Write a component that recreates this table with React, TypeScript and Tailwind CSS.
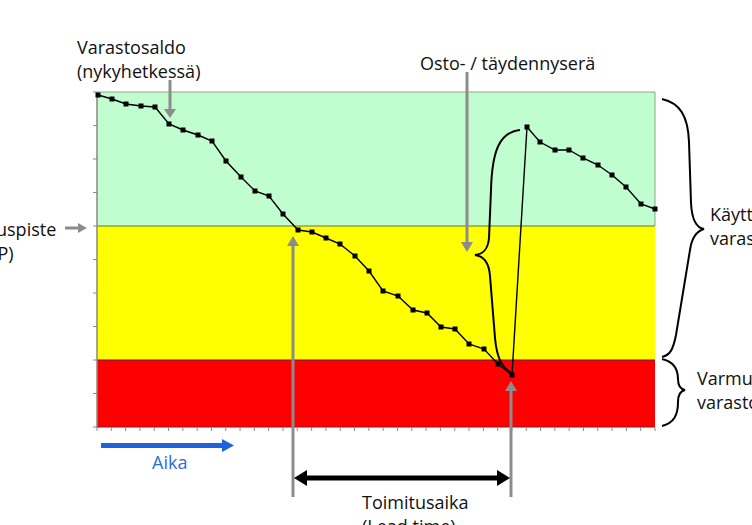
const FONT = '"Open Sans", "Liberation Sans", sans-serif';

// Inventory level samples: [x, y] in page pixels
const part1: [number, number][] = [
  [98, 95], [112, 99], [126, 104], [141, 106], [155, 107], [169, 124], [183, 130],
  [198, 135], [212, 141], [226, 161], [241, 177], [255, 191], [269, 196], [283, 214],
  [298, 230], [312, 232], [326, 238], [340, 244], [355, 256], [369, 271], [383, 291],
  [398, 296], [413, 310], [427, 313], [441, 327], [455, 329], [469, 344], [484, 349],
  [498, 364], [512, 375],
];
const part2: [number, number][] = [
  [527, 127], [540, 142], [555, 150], [569, 150], [583, 158], [598, 165], [612, 175],
  [626, 187], [641, 204], [655, 209],
];

const left = 97;
const right = 655;
const top = 92;
const bottom = 427;

const yTicks = Array.from({ length: 11 }, (_, i) => top + (i * (bottom - top)) / 10);
const xTicks = Array.from({ length: 40 }, (_, i) => left + (i * (right - left)) / 39);

function Label({ x, y, lines, color = "#111" }: { x: number; y: number; lines: string[]; color?: string }) {
  return (
    <text x={x} y={y} fontFamily={FONT} fontSize={18} fill={color}>
      {lines.map((l, i) => (
        <tspan key={i} x={x} dy={i === 0 ? 0 : 24}>
          {l}
        </tspan>
      ))}
    </text>
  );
}

export default function App() {
  const all = [...part1, ...part2];
  const linePts = all.map(([x, y]) => `${x},${y}`).join(" ");

  return (
    <div className="relative h-[525px] w-[752px] overflow-hidden bg-white">
      <svg width={752} height={525} viewBox="0 0 752 525" className="block">
        {/* bands */}
        <rect x={left} y={top} width={right - left} height={226 - top} fill="#c0fdcf" />
        <rect x={left} y={226} width={right - left} height={360 - 226} fill="#ffff00" />
        <rect x={left} y={360} width={right - left} height={bottom - 360} fill="#ff0000" />
        <line x1={left} y1={top} x2={right} y2={top} stroke="#8ea58a" strokeWidth={1} />
        <line x1={right} y1={top} x2={right} y2={226} stroke="#8ea58a" strokeWidth={1} />
        <line x1={left} y1={226} x2={right} y2={226} stroke="#6b7446" strokeWidth={1.2} />
        <line x1={left} y1={360} x2={right} y2={360} stroke="#6a1010" strokeWidth={1} />
        <line x1={left} y1={bottom} x2={right} y2={bottom} stroke="#7a2020" strokeWidth={1} />

        {/* axes */}
        <line x1={left} y1={top} x2={left} y2={bottom + 1} stroke="#8a8a7a" strokeWidth={1.5} />
        {yTicks.map((y, i) => (
          <line key={i} x1={left - 4} y1={y} x2={left} y2={y} stroke="#8a8a8a" strokeWidth={1} />
        ))}
        {xTicks.map((x, i) => (
          <line key={i} x1={x} y1={bottom} x2={x} y2={bottom + 4} stroke="#8a8a8a" strokeWidth={1} />
        ))}

        {/* inventory line */}
        <polyline points={linePts} fill="none" stroke="#000" strokeWidth={1.4} />
        {all.map(([x, y], i) => (
          <rect key={i} x={x - 2.5} y={y - 2.5} width={5} height={5} fill="#000" />
        ))}

        {/* order quantity brace */}
        <path
          d="M 520 130 C 500 132 492 150 491 190 L 489 238 C 488 250 483 254 475 255 C 483 256 489 262 490 276 L 495 338 C 497 360 503 368 511 373"
          fill="none"
          stroke="#000"
          strokeWidth={2}
        />

        {/* right braces */}
        <path
          d="M 662 99 C 680 103 688 116 689 142 L 691 203 C 692 222 697 228 704 229 C 697 231 692 236 690 250 L 676 335 C 673 350 670 355 662 357"
          fill="none"
          stroke="#000"
          strokeWidth={2}
        />
        <path
          d="M 662 359 C 675 362 678 370 678 379 C 678 386 680 389 685 390 C 680 391 678 395 678 402 C 678 415 674 423 662 426"
          fill="none"
          stroke="#000"
          strokeWidth={2}
        />

        {/* gray pointer arrows */}
        <g stroke="#8c8c8c" strokeWidth={3} fill="#8c8c8c">
          <line x1={170} y1={80} x2={170} y2={110} />
          <polygon points="164,109 176,109 170,118" stroke="none" />

          <line x1={467} y1={72} x2={467} y2={243} />
          <polygon points="461,242 473,242 467,252" stroke="none" />

          <line x1={65} y1={228} x2={79} y2={228} />
          <polygon points="78,223 78,233 87,228" stroke="none" />

          <line x1={293} y1={245} x2={293} y2={497} />
          <polygon points="287,246 299,246 293,236" stroke="none" />

          <line x1={511} y1={390} x2={511} y2={497} />
          <polygon points="505,391 517,391 511,381" stroke="none" />
        </g>

        {/* time arrow */}
        <rect x={101} y={443} width={124} height={5} fill="#1f63dc" />
        <polygon points="222,439 222,452 234,445.5" fill="#1f63dc" />

        {/* lead time arrow */}
        <rect x={305} y={475.5} width={194} height={5} fill="#000" />
        <polygon points="294,478 307,470 307,486" fill="#000" />
        <polygon points="510,478 497,470 497,486" fill="#000" />

        {/* labels */}
        <Label x={77} y={54} lines={["Varastosaldo", "(nykyhetkessä)"]} />
        <Label x={420} y={70} lines={["Osto- / täydennyserä"]} />
        <Label x={-33} y={236} lines={["Tilauspiste", "(ROP)"]} />
        <Label x={710} y={221} lines={["Käyttö-", "varasto"]} />
        <Label x={697} y={385} lines={["Varmuus-", "varasto"]} />
        <Label x={152} y={469} lines={["Aika"]} color="#2a6fd6" />
        <Label x={362} y={509} lines={["Toimitusaika", "(Lead time)"]} />
      </svg>
    </div>
  );
}
